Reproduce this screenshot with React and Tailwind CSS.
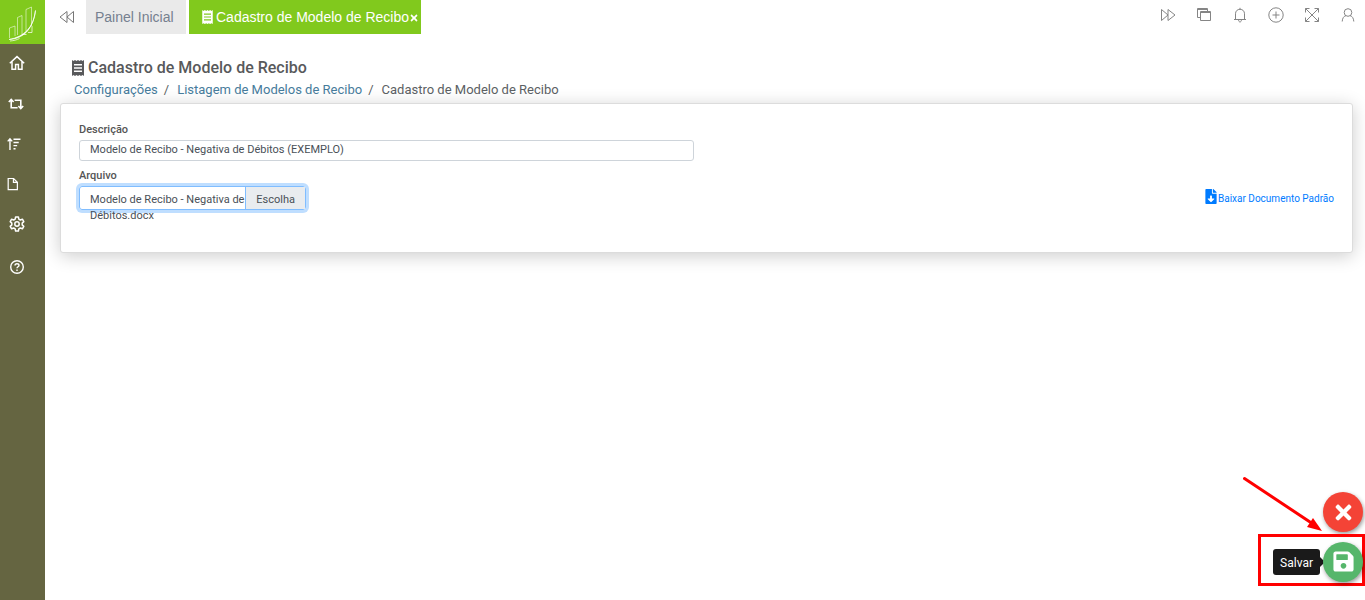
import { useState } from 'react';
import { FaFileDownload, FaSave, FaTimes } from 'react-icons/fa';

// Thin line icons share the same stroke setup
function LineIcon({ box = '0 0 16 16', className, width = 1, children }) {
  return (
    <svg viewBox={box} className={className} fill="none" stroke="currentColor" strokeWidth={width} aria-hidden="true">
      {children}
    </svg>
  );
}

// Receipt with torn top and bottom edges
function ReceiptIcon({ className }) {
  return (
    <svg viewBox="0 0 12 16" className={className} fill="currentColor" aria-hidden="true">
      <path
        fillRule="evenodd"
        d="M0 0l1.500 1L3 0l1.500 1L6 0l1.500 1L9 0l1.500 1L12 0v16l-1.500-1L9 16l-1.500-1L6 16l-1.500-1L3 16l-1.500-1L0 16zM2 4v1.400h8V4zM2 7.300v1.400h8V7.300zM2 10.600V12h8v-1.400z"
      />
    </svg>
  );
}

const MENU = [
  {
    label: 'Início',
    cell: 'h-[38px] pl-[9px]',
    icon: (
      <LineIcon className="size-4" width={1.5}>
        <path d="M.8 8.3 8 1.6l7.2 6.7M3 6.8v7.4h3.6V9.4h2.8v4.8H13V6.8" />
      </LineIcon>
    ),
  },
  {
    label: 'Movimentações',
    cell: 'h-[42px] pl-2',
    icon: (
      <LineIcon className="size-4" width={1.6}>
        <path d="M.8 7 3.2 4.4 5.600 7M3.200 4.600v8.200h6.400M15.200 11l-2.400 2.600-2.400-2.600M12.800 13.400V5.200H6.600" />
      </LineIcon>
    ),
  },
  {
    label: 'Ordenação',
    cell: 'h-10 pl-[7px]',
    icon: (
      <LineIcon className="size-[14px]" width={1.6}>
        <path d="M.8 5 3.4 2 6 5M3.4 2.4v12.4M7.4 2.6h8M7.4 6.2h6M7.4 9.8h4.2M7.4 13.4h2.4" />
      </LineIcon>
    ),
  },
  {
    label: 'Documentos',
    cell: 'h-10 pl-[6px]',
    icon: (
      <LineIcon className="size-[14px]" width={1.4}>
        <path d="M2.5 1.7h6.2L13 6v8.3H2.5zM8.5 1.7v4.5H13" />
      </LineIcon>
    ),
  },
  {
    label: 'Configurações',
    cell: 'h-10 pl-[9px]',
    icon: (
      <LineIcon className="size-4" width={1.5}>
        <path
          strokeLinejoin="round"
          d="M6.6 1h2.8l.4 2.1 1.5.9 2.1-.8 1.4 2.4-1.6 1.5v1.8l1.6 1.5-1.4 2.4-2.1-.8-1.5.9-.4 2.1H6.6l-.4-2.1-1.5-.9-2.1.8-1.4-2.4 1.6-1.5V7.1L1.2 5.6l1.4-2.4 2.1.8 1.5-.9z"
        />
        <circle cx="8" cy="8" r="2.2" />
      </LineIcon>
    ),
  },
  {
    label: 'Ajuda',
    cell: 'h-[46px] pl-[9px]',
    icon: (
      <LineIcon className="size-4" width={1.4}>
        <circle cx="8" cy="8" r="6.3" />
        <path d="M6 6.6C6 5.4 6.8 4.7 8 4.7s2 .7 2 1.7c0 1.3-2 1.4-2 2.9M8 10.4v1.5" />
      </LineIcon>
    ),
  },
];

const ACTIONS = [
  { label: 'Avançar', icon: <path d="M1.5 2.5v11L8 8zM8 2.5v11L15 8z" /> },
  { label: 'Janelas', icon: <path d="M4.500 4.500h10v9h-10zM4.500 10.500h-3v-9h10v3M1.500 2.500h10M4.500 5.500h10" /> },
  { label: 'Notificações', icon: <path d="M2 12.5h12M3.5 12.5V6.8C3.5 4 5.4 2.3 8 2.3s4.5 1.7 4.5 4.5v5.7M8 2.3V.8M6.6 13c0 2.6 2.8 2.6 2.8 0" /> },
  { label: 'Adicionar', icon: <><circle cx="8" cy="8" r="7.2" /><path d="M8 4.5v7M4.5 8h7" /></> },
  { label: 'Tela cheia', icon: <path d="m1.5 1.5 13 13M14.5 1.5l-13 13M1.5 5.5v-4h4M10.5 1.5h4v4M14.5 10.5v4h-4M5.5 14.5h-4v-4" /> },
  { label: 'Usuário', icon: <><circle cx="8" cy="5.5" r="3.8" /><path d="M2.2 14.5c.2-3.4 1.6-5.3 3.8-5.9M13.8 14.5c-.2-3.4-1.6-5.3-3.8-5.9" /></> },
];

function Sidebar() {
  return (
    <aside className="w-[45px] shrink-0 bg-[#656541] text-white">
      <a href="#inicio" aria-label="Página inicial" className="block h-11 bg-[#81c91d]">
        <svg viewBox="0 0 45 44" className="h-11 w-full" fill="none" stroke="#fff" strokeWidth="0.7" aria-hidden="true">
          <path d="M9.500 38V28l5.500-2v10M17.500 35V17.500l4.500-2V34M26 31V9.500l5.500-2.500v19" opacity=".75" />
          <path d="M9 39.500c14-1 23.500-9 26.500-29C34 27 24 37 9 39.500z" fill="#fff" />
          <path d="M10 41c4-.3 7-1.200 9.500-2.500M22 34.500h4.500M28 32.500h4V26" />
        </svg>
      </a>
      <nav>
        {MENU.map(item => (
          <a key={item.label} href="#menu" aria-label={item.label} className={`flex items-center ${item.cell}`}>
            {item.icon}
          </a>
        ))}
      </nav>
    </aside>
  );
}

function TopBar() {
  return (
    <header className="flex h-[34px] items-start justify-between font-['Liberation_Sans',Arial,sans-serif] text-sm">
      <div className="flex h-full items-center">
        <button type="button" aria-label="Voltar" className="mr-[11px] ml-[14px] text-[#777]">
          <LineIcon className="size-4">
            <path d="M14.500 2.500v11L8 8zM8 2.500v11L1 8z" />
          </LineIcon>
        </button>
        <a href="#painel" className="mr-[3px] flex h-full items-center bg-[#eaeaea] px-[9px] text-[#76808f]">
          <span className="w-[82px]">Painel Inicial</span>
        </a>
        <div className="flex h-full items-center bg-[#81c91d] pr-[2px] pl-[13px] text-white">
          <a href="#recibo" className="flex items-center gap-[3px]">
            <ReceiptIcon className="h-[14px] w-[11px]" /> Cadastro de Modelo de Recibo
          </a>
          <button type="button" aria-label="Fechar aba" className="pt-[2px]">
            <FaTimes size={10} />
          </button>
        </div>
      </div>
      <div className="flex gap-5 pt-[7px] pr-[9px] text-[#858585]">
        {ACTIONS.map(a => (
          <button key={a.label} type="button" aria-label={a.label}>
            <LineIcon className="size-4">{a.icon}</LineIcon>
          </button>
        ))}
      </div>
    </header>
  );
}

function Breadcrumb() {
  return (
    <nav aria-label="Trilha" className="flex gap-[6px] pl-[14px] text-[13px] leading-5 text-[#5b5f63]">
      <a href="#config" className="text-[#467b9b]">Configurações</a>
      <span className="pr-[2px]">/</span>
      <a href="#modelos" className="text-[#467b9b]">Listagem de Modelos de Recibo</a>
      <span className="pr-[2px]">/</span>
      <span>Cadastro de Modelo de Recibo</span>
    </nav>
  );
}

function ReceiptForm() {
  const [descricao, setDescricao] = useState('Modelo de Recibo - Negativa de Débitos (EXEMPLO)');
  const [arquivo, setArquivo] = useState('Modelo de Recibo - Negativa de Débitos.docx');

  return (
    <form id="recibo-form" className="rounded-[3px] border border-[#dcdcdc] bg-white px-[18px] pt-[18px] pb-[42px] text-[11px] text-[#495057] shadow-[0_3px_18px_rgba(0,0,0,0.2)]">
      <label htmlFor="descricao" className="block leading-4 font-medium text-[#555]">Descrição</label>
      <input
        id="descricao"
        type="text"
        value={descricao}
        onChange={e => setDescricao(e.target.value)}
        className="mt-[2px] block h-[21px] w-[49%] rounded-[3px] border border-[#ced4da] px-[10px] pb-[3px] leading-4 outline-none"
      />
      <div className="mt-[7px] flex items-start justify-between">
        <div>
          <label htmlFor="arquivo" className="block leading-4 font-medium text-[#555]">Arquivo</label>
          <input
            id="arquivo"
            type="file"
            className="sr-only"
            onChange={e => setArquivo(e.target.files[0]?.name || arquivo)}
          />
          {/* The file name reaches the button edge and wraps below the box */}
          <label htmlFor="arquivo" className="mt-[2px] flex h-6 w-[227px] rounded-[3px] border border-[#80bdff] leading-4 shadow-[0_0_0_3px_#bfdeff]">
            <span className="-mr-1 flex-1 pt-[5px] pl-[10px]">{arquivo}</span>
            <span className="z-10 h-full border-l border-[#80bdff] bg-[#e9ecef] px-[10px] pt-[5px]">Escolha</span>
          </label>
        </div>
        <a href="#download" className="flex items-start gap-px pt-[21px] text-[10px] leading-4 text-[#007bff]">
          <FaFileDownload className="h-[15px] w-3" /> <span className="pt-[2px]">Baixar Documento Padrão</span>
        </a>
      </div>
    </form>
  );
}

function FloatingActions() {
  return (
    <div className="fixed right-0 bottom-[14px] flex flex-col items-end">
      <svg viewBox="0 0 80 56" className="absolute -top-4 right-[42px] h-14 w-20" aria-hidden="true">
        <path d="M1.500 2.500 70 48" stroke="#f00" strokeWidth="3" strokeLinecap="round" />
        <path d="m79 55-15-4 6-9z" fill="#f00" />
      </svg>
      <button type="button" aria-label="Cancelar" className="mr-[2px] mb-[2px] flex size-10 items-center justify-center rounded-full bg-[#f44336] text-white shadow-[1px_2px_4px_rgba(0,0,0,0.4)]">
        <FaTimes size={23} />
      </button>
      <div className="flex h-[52px] items-center border-3 border-[#f00] pt-[3px] pl-3">
        <span role="tooltip" className="rounded-[3px] bg-[#1a1a1a] px-[7px] pt-1 pb-[2px] text-xs leading-5 text-white">Salvar</span>
        <span className="border-y-5 border-l-5 border-y-transparent border-l-[#1a1a1a]" />
        <button type="submit" form="recibo-form" aria-label="Salvar" className="-ml-[2px] -mr-px flex size-10 items-center justify-center rounded-full bg-[#56b66b] text-white shadow-[1px_2px_4px_rgba(0,0,0,0.4)]">
          <FaSave size={23} />
        </button>
      </div>
    </div>
  );
}

export default function App() {
  return (
    <div className="flex min-h-screen bg-white font-[Roboto,sans-serif]">
      <Sidebar />
      <div className="min-w-0 flex-1">
        <TopBar />
        <main className="pt-[22px] pr-3 pl-[15px]">
          <h1 className="flex items-center gap-1 pl-3 text-base leading-6 font-medium text-[#58595b]">
            <ReceiptIcon className="h-4 w-3" /> Cadastro de Modelo de Recibo
          </h1>
          <Breadcrumb />
          <div className="pt-[3px]">
            <ReceiptForm />
          </div>
        </main>
      </div>
      <FloatingActions />
    </div>
  );
}
